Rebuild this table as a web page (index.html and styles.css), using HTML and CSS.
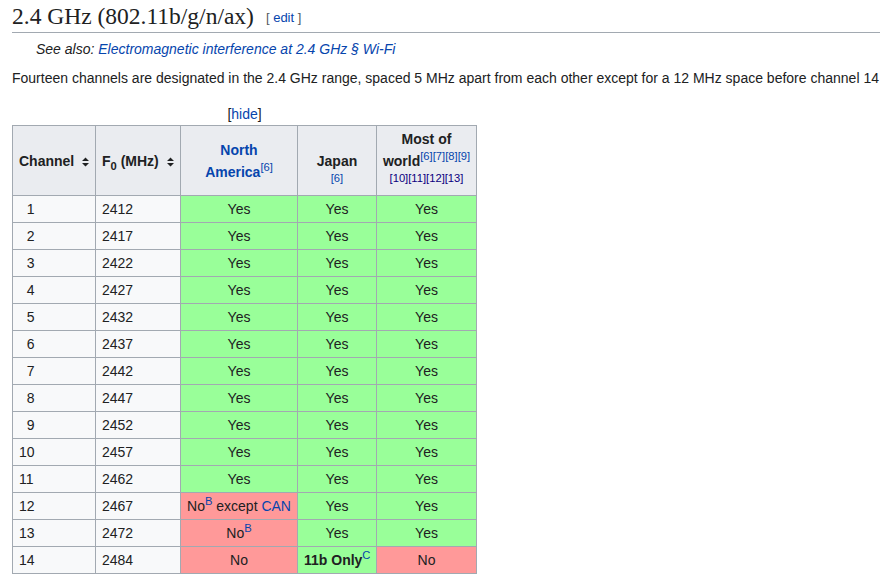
FILE: index.html
```html
<!DOCTYPE html>
<html lang="en">
<head>
<meta charset="utf-8">
<title>2.4 GHz (802.11b/g/n/ax)</title>
<link rel="stylesheet" href="styles.css">
</head>
<body>
<div class="content">
  <h2 class="heading"><span class="headline">2.4 GHz (802.11b/g/n/ax)</span><span class="editsection"><span class="bracket">[ </span><a href="#">edit</a><span class="bracket"> ]</span></span></h2>
  <div class="hatnote">See also: <a href="#">Electromagnetic interference at 2.4 GHz § Wi-Fi</a></div>
  <p class="para">Fourteen channels are designated in the 2.4 GHz range, spaced 5 MHz apart from each other except for a 12 MHz space before channel 14</p>
  <table class="wikitable">
    <caption class="toggle"><span class="tbracket">[</span><a href="#">hide</a>]</caption>
    <colgroup>
      <col class="c1"><col class="c2"><col class="c3"><col class="c4"><col class="c5">
    </colgroup>
    <thead>
      <tr>
        <th class="sortable">Channel<svg class="sorticon" width="7" height="10" viewBox="0 0 7 10"><path d="M0 4 L3.5 0.5 L7 4 Z M0 6 L3.5 9.5 L7 6 Z" fill="#202122"/></svg></th>
        <th class="sortable">F<sub>0</sub> (MHz)<svg class="sorticon" width="7" height="10" viewBox="0 0 7 10"><path d="M0 4 L3.5 0.5 L7 4 Z M0 6 L3.5 9.5 L7 6 Z" fill="#202122"/></svg></th>
        <th><a href="#">North<br>America</a><sup><a href="#">[6]</a></sup></th>
        <th class="japan">Japan<br><sup><a href="#">[6]</a></sup></th>
        <th class="world">Most of<br>world<sup><a href="#">[6]</a><a href="#">[7]</a><a href="#">[8]</a><a href="#">[9]</a></sup><br><sup><a class="visited" href="#">[10]</a><a class="visited" href="#">[11]</a><a class="visited" href="#">[12]</a><a class="visited" href="#">[13]</a></sup></th>
      </tr>
    </thead>
    <tbody>
      <tr><td><span class="pad">0</span>1</td><td>2412</td><td class="yes">Yes</td><td class="yes">Yes</td><td class="yes">Yes</td></tr>
      <tr><td><span class="pad">0</span>2</td><td>2417</td><td class="yes">Yes</td><td class="yes">Yes</td><td class="yes">Yes</td></tr>
      <tr><td><span class="pad">0</span>3</td><td>2422</td><td class="yes">Yes</td><td class="yes">Yes</td><td class="yes">Yes</td></tr>
      <tr><td><span class="pad">0</span>4</td><td>2427</td><td class="yes">Yes</td><td class="yes">Yes</td><td class="yes">Yes</td></tr>
      <tr><td><span class="pad">0</span>5</td><td>2432</td><td class="yes">Yes</td><td class="yes">Yes</td><td class="yes">Yes</td></tr>
      <tr><td><span class="pad">0</span>6</td><td>2437</td><td class="yes">Yes</td><td class="yes">Yes</td><td class="yes">Yes</td></tr>
      <tr><td><span class="pad">0</span>7</td><td>2442</td><td class="yes">Yes</td><td class="yes">Yes</td><td class="yes">Yes</td></tr>
      <tr><td><span class="pad">0</span>8</td><td>2447</td><td class="yes">Yes</td><td class="yes">Yes</td><td class="yes">Yes</td></tr>
      <tr><td><span class="pad">0</span>9</td><td>2452</td><td class="yes">Yes</td><td class="yes">Yes</td><td class="yes">Yes</td></tr>
      <tr><td>10</td><td>2457</td><td class="yes">Yes</td><td class="yes">Yes</td><td class="yes">Yes</td></tr>
      <tr><td>11</td><td>2462</td><td class="yes">Yes</td><td class="yes">Yes</td><td class="yes">Yes</td></tr>
      <tr><td>12</td><td>2467</td><td class="no">No<sup><a href="#">B</a></sup> except <a href="#">CAN</a></td><td class="yes">Yes</td><td class="yes">Yes</td></tr>
      <tr><td>13</td><td>2472</td><td class="no">No<sup><a href="#">B</a></sup></td><td class="yes">Yes</td><td class="yes">Yes</td></tr>
      <tr><td>14</td><td>2484</td><td class="no">No</td><td class="yes"><b>11b Only</b><sup><a href="#">C</a></sup></td><td class="no">No</td></tr>
    </tbody>
  </table>
</div>
</body>
</html>
```

FILE: styles.css
```css
html, body {
  margin: 0;
  padding: 0;
  background: #ffffff;
}

body {
  font-family: "Liberation Sans", Arial, sans-serif;
  font-size: 14px;
  color: #202122;
  line-height: 1.6;
}

a {
  color: #0645ad;
  text-decoration: none;
}

a.visited {
  color: #0b0080;
}

.content {
  padding-left: 12px;
}

.heading {
  margin: 0;
  padding-top: 2px;
  font-family: "Liberation Serif", "DejaVu Serif", serif;
  font-size: 23.5px;
  font-weight: normal;
  line-height: 28px;
  border-bottom: 1px solid #a2a9b1;
  white-space: nowrap;
}

.editsection {
  font-family: "Liberation Sans", Arial, sans-serif;
  font-size: 13px;
  margin-left: 12px;
  vertical-align: 2px;
}

.editsection .bracket {
  color: #54595d;
}

.hatnote {
  margin-top: 5px;
  padding-left: 24px;
  font-style: italic;
  line-height: 22px;
}

.para {
  margin: 7px 0 0;
  line-height: 22px;
  white-space: nowrap;
}

.wikitable {
  margin-top: 14px;
  border-collapse: collapse;
  border: 1px solid #a2a9b1;
  table-layout: fixed;
  width: 464px;
  background: #f8f9fa;
  color: #202122;
}

.toggle {
  caption-side: top;
  line-height: 22px;
  font-size: 14px;
  text-align: center;
}

.tbracket {
  color: #202122;
}

.c1 { width: 83px; }
.c2 { width: 85px; }
.c3 { width: 117px; }
.c4 { width: 79px; }
.c5 { width: 100px; }

.wikitable th,
.wikitable td {
  border: 1px solid #a2a9b1;
  padding: 2px 6px;
}

.wikitable th {
  background: #eaecf0;
  font-weight: bold;
  text-align: center;
  line-height: 22px;
  height: 66px;
  padding: 2px 5px 1px;
  vertical-align: middle;
}

.wikitable th sup {
  font-weight: normal;
}

.wikitable th.sortable {
  text-align: left;
  white-space: nowrap;
  padding-left: 6px;
}

.wikitable th.japan {
  vertical-align: bottom;
}

.wikitable th.world {
  white-space: nowrap;
  padding-left: 2px;
  padding-right: 2px;
}

.sorticon {
  margin-left: 8px;
  vertical-align: -1px;
}

.wikitable td {
  height: 22px;
  line-height: 22px;
  white-space: nowrap;
}

.wikitable td.yes {
  background: #99ff99;
  text-align: center;
}

.wikitable td.no {
  background: #ff9999;
  text-align: center;
}

.pad {
  visibility: hidden;
}

sup {
  font-size: 80%;
  line-height: 1;
  vertical-align: super;
}

sub {
  font-size: 80%;
  line-height: 1;
  vertical-align: sub;
}
```
